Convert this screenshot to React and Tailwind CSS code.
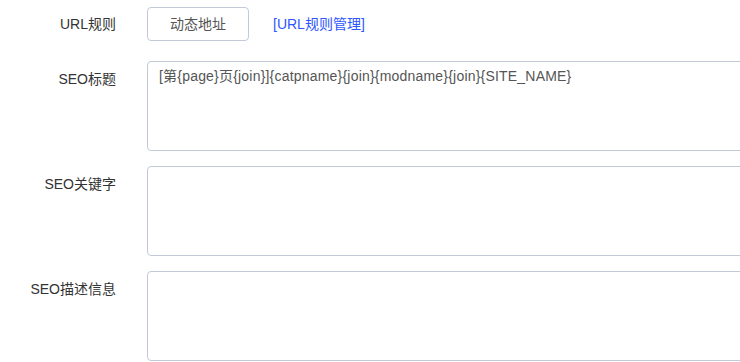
export default function App() {
  const font = { fontFamily: '"Liberation Sans", "Noto Sans CJK SC", sans-serif' };
  const rows = [
    { label: "SEO标题", value: "[第{page}页{join}]{catpname}{join}{modname}{join}{SITE_NAME}" },
    { label: "SEO关键字", value: "" },
    { label: "SEO描述信息", value: "" },
  ];
  return (
    <div className="w-[740px] h-[362px] overflow-hidden bg-white text-[14px] text-[#333]" style={font}>
      <div className="flex items-center pt-[7px]">
        <div className="w-[116px] text-right">URL规则</div>
        <div className="ml-[31px] h-[34px] w-[102px] flex items-center justify-center border border-[#c2cad8] rounded-[4px] text-[#555]">动态地址</div>
        <a className="ml-[24px] text-[#2e56ff]">[URL规则管理]</a>
      </div>
      <div className="flex flex-col gap-[15px] mt-[20px]">
        {rows.map((r) => (
          <div key={r.label} className="flex items-start">
            <div className="w-[116px] text-right pt-[8px] shrink-0">{r.label}</div>
            <div className="ml-[31px] w-[640px] h-[90px] shrink-0 border border-[#c2cad8] rounded-[4px] pl-[11px] pr-[10px] pt-[4px] leading-[20px] tracking-[0.2px] text-[#555]">
              {r.value}
            </div>
          </div>
        ))}
      </div>
    </div>
  );
}
